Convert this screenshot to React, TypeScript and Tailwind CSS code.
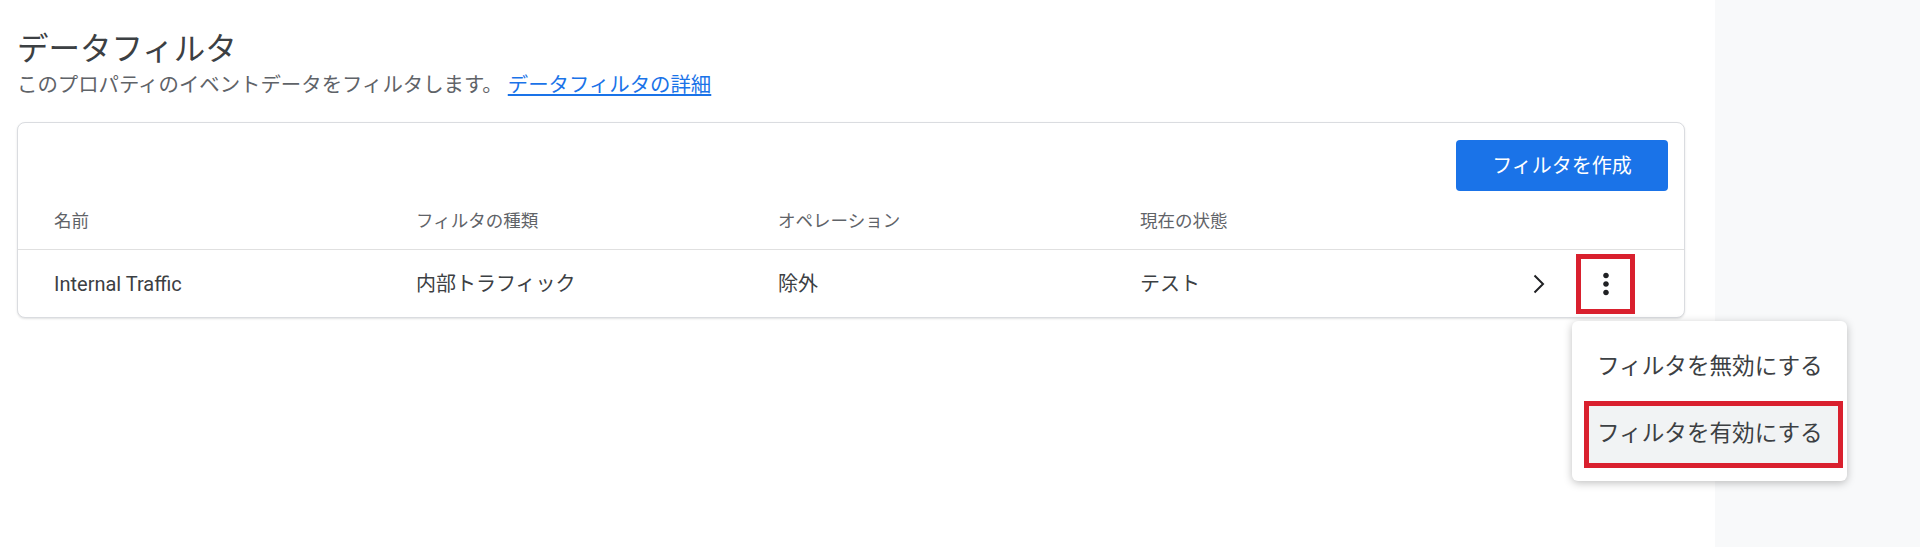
import { ReactNode } from 'react';

const cols = ['名前', 'フィルタの種類', 'オペレーション', '現在の状態'];
const row = ['Internal Traffic', '内部トラフィック', '除外', 'テスト'];

const Chevron = () => (
  <svg viewBox="0 0 12 20" className="h-[20px] w-[12px] fill-none stroke-[#202124]" strokeWidth={2}>
    <path d="M1.5 1.5 10 10 1.5 18.5" />
  </svg>
);

const MoreVert = () => (
  <svg viewBox="0 0 24 24" className="h-[34px] w-[34px] fill-[#202124]">
    <path d="M12 8c1.1 0 2-.9 2-2s-.9-2-2-2-2 .9-2 2 .9 2 2 2zm0 2c-1.1 0-2 .9-2 2s.9 2 2 2 2-.9 2-2-.9-2-2-2zm0 6c-1.1 0-2 .9-2 2s.9 2 2 2 2-.9 2-2-.9-2-2-2z" />
  </svg>
);

const MenuItem = ({ children, marked }: { children: ReactNode; marked?: boolean }) =>
  marked ? (
    <div className="ml-[12px] mr-[4px] flex h-[67px] items-center border-[5px] border-[#d9202e] bg-[#f1f3f4] pl-[8px] text-[22.6px] text-[#3c4043]">
      {children}
    </div>
  ) : (
    <div className="flex h-[68px] items-center pl-[25px] text-[22.6px] text-[#3c4043]">{children}</div>
  );

const App = () => {
  return (
    <div className="flex min-h-[547px] w-full bg-white font-['Roboto','Noto_Sans_CJK_JP',sans-serif]">
      <main className="w-[1715px] shrink-0 pl-[17px] pr-[30px] pt-[30px]">
        <h1 className="text-[31.5px] leading-[40px] text-[#3c4043]">データフィルタ</h1>
        <p className="text-[20.4px] leading-[30px] text-[#5f6368]">
          このプロパティのイベントデータをフィルタします。{' '}
          <a href="#" className="text-[#1a73e8] underline underline-offset-2">
            データフィルタの詳細
          </a>
        </p>

        <section className="mt-[22px] rounded-lg border border-[#dadce0] bg-white shadow-[0_1px_2px_rgba(60,64,67,0.15)]">
          <div className="flex justify-end pr-[16px] pt-[17px]">
            <button className="h-[51px] w-[212px] rounded-[4px] bg-[#1a73e8] text-[20px] text-white">
              フィルタを作成
            </button>
          </div>

          <div className="flex h-[59px] items-center border-b border-[#e0e0e0] pl-[36px] pt-[2px] text-[17.5px] text-[#5f6368]">
            {cols.map((c) => (
              <div key={c} className="w-[362px]">
                {c}
              </div>
            ))}
          </div>

          <div className="flex h-[67px] items-center pl-[36px] text-[20px] text-[#3c4043]">
            {row.map((c) => (
              <div key={c} className="w-[362px]">
                {c}
              </div>
            ))}
            <div className="flex-1" />
            <Chevron />
            <div className="relative ml-[31px] mr-[49px]">
              <div className="flex h-[60px] w-[59px] items-center justify-center border-[5px] border-[#d9202e]">
                <MoreVert />
              </div>
              <div className="absolute left-[-4px] top-[67px] z-10 w-[275px] rounded-md bg-white pb-[13px] pt-[12px] shadow-[0_2px_8px_rgba(0,0,0,0.25)]">
                <MenuItem>フィルタを無効にする</MenuItem>
                <MenuItem marked>フィルタを有効にする</MenuItem>
              </div>
            </div>
          </div>
        </section>
      </main>
      <aside className="flex-1 bg-[#f8f9fa]" />
    </div>
  );
};

export default App;
